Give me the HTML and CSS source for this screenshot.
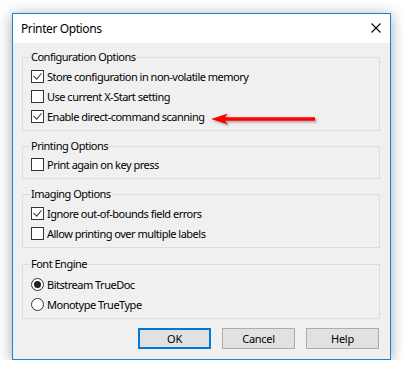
FILE: index.html
```html
<!DOCTYPE html>
<html>
<head>
<meta charset="utf-8">
<link rel="stylesheet" href="styles.css">
</head>
<body>
<div class="dialog">
  <div class="titlebar">
    <span class="title">Printer Options</span>
    <svg class="close" width="10" height="10" viewBox="0 0 10 10"><path d="M0.5 0.5 L9.5 9.5 M9.5 0.5 L0.5 9.5" stroke="#000" stroke-width="1.1" fill="none"/></svg>
  </div>
  <div class="content">
    <fieldset class="group g1">
      <legend>Configuration Options</legend>
      <div class="row"><span class="cb checked"></span><span>Store configuration in non-volatile memory</span></div>
      <div class="row"><span class="cb"></span><span>Use current X-Start setting</span></div>
      <div class="row"><span class="cb checked"></span><span>Enable direct-command scanning</span></div>
    </fieldset>
    <fieldset class="group g2">
      <legend>Printing Options</legend>
      <div class="row"><span class="cb"></span><span>Print again on key press</span></div>
    </fieldset>
    <fieldset class="group g3">
      <legend>Imaging Options</legend>
      <div class="row"><span class="cb checked"></span><span>Ignore out-of-bounds field errors</span></div>
      <div class="row"><span class="cb"></span><span>Allow printing over multiple labels</span></div>
    </fieldset>
    <fieldset class="group g4">
      <legend>Font Engine</legend>
      <div class="row"><span class="rb checked"></span><span>Bitstream TrueDoc</span></div>
      <div class="row"><span class="rb"></span><span>Monotype TrueType</span></div>
    </fieldset>
    <div class="buttons">
      <div class="btn default">OK</div>
      <div class="btn">Cancel</div>
      <div class="btn">Help</div>
    </div>
    <svg class="arrow" width="112" height="18" viewBox="0 0 112 18">
      <defs>
        <filter id="sh" x="-10%" y="-50%" width="120%" height="200%">
          <feDropShadow dx="1.5" dy="1.5" stdDeviation="1" flood-color="#000" flood-opacity="0.35"/>
        </filter>
      </defs>
      <g filter="url(#sh)">
        <path d="M2 8 L19 2.5 L16 6.3 L106 6.3 L106 9.7 L16 9.7 L19 13.5 Z" fill="#f00"/>
      </g>
    </svg>
  </div>
</div>
</body>
</html>
```
FILE: styles.css
```css
html, body {
  margin: 0;
  padding: 0;
  background: #fff;
}
body {
  font-family: "Noto Sans", "Open Sans", sans-serif;
  font-size: 11px;
  letter-spacing: -0.5px;
  color: #000;
}
.dialog {
  margin: 13px 0 0 12px;
  width: 377px;
  height: 345px;
  border: 1px solid #1883d7;
  box-shadow: 0 2px 14px rgba(0,0,0,0.35);
  display: flex;
  flex-direction: column;
  background: #f0f0f0;
}
.titlebar {
  height: 29px;
  background: #fff;
  display: flex;
  align-items: center;
  justify-content: space-between;
  padding: 0 9px 0 8px;
  flex: none;
}
.title {
  font-size: 12px;
  letter-spacing: -0.4px;
  padding-bottom: 1px;
}
.close {
  margin-top: -1px;
}
.content {
  position: relative;
  flex: 1;
  display: flex;
  flex-direction: column;
  padding: 6px 10px 0 9px;
}
.group {
  margin: 0;
  border: 1px solid #dcdcdc;
  padding: 1px 8px 4px 8px;
  min-width: 0;
}
.group legend {
  padding: 0 1px;
  margin-left: -1px;
  line-height: 16px;
}
.g2 { margin-top: 7px; padding-top: 0; }
.g3 { margin-top: 7px; }
.g4 { margin-top: 8px; padding-top: 2px; }
.row {
  display: flex;
  align-items: center;
  height: 20px;
}
.cb, .rb {
  width: 11px;
  height: 11px;
  border: 1px solid #333;
  background: #fff;
  margin-right: 3px;
  position: relative;
  flex: none;
}
.cb.checked::after {
  content: "";
  position: absolute;
  left: 3px;
  top: 0px;
  width: 4px;
  height: 7px;
  border-right: 1px solid #333;
  border-bottom: 1px solid #333;
  transform: rotate(40deg);
}
.rb {
  border-radius: 50%;
}
.rb.checked::after {
  content: "";
  position: absolute;
  left: 2px;
  top: 2px;
  width: 7px;
  height: 7px;
  border-radius: 50%;
  background: #222;
}
.buttons {
  display: flex;
  justify-content: flex-end;
  gap: 11px;
  margin-top: 9px;
  padding-right: 1px;
}
.btn {
  width: 71px;
  height: 19px;
  border: 1px solid #adadad;
  background: #e1e1e1;
  display: flex;
  align-items: center;
  justify-content: center;
  letter-spacing: -0.3px;
}
.btn.default {
  width: 69px;
  height: 17px;
  border: 2px solid #0078d7;
}
.arrow {
  position: absolute;
  left: 196px;
  top: 68px;
}
```
